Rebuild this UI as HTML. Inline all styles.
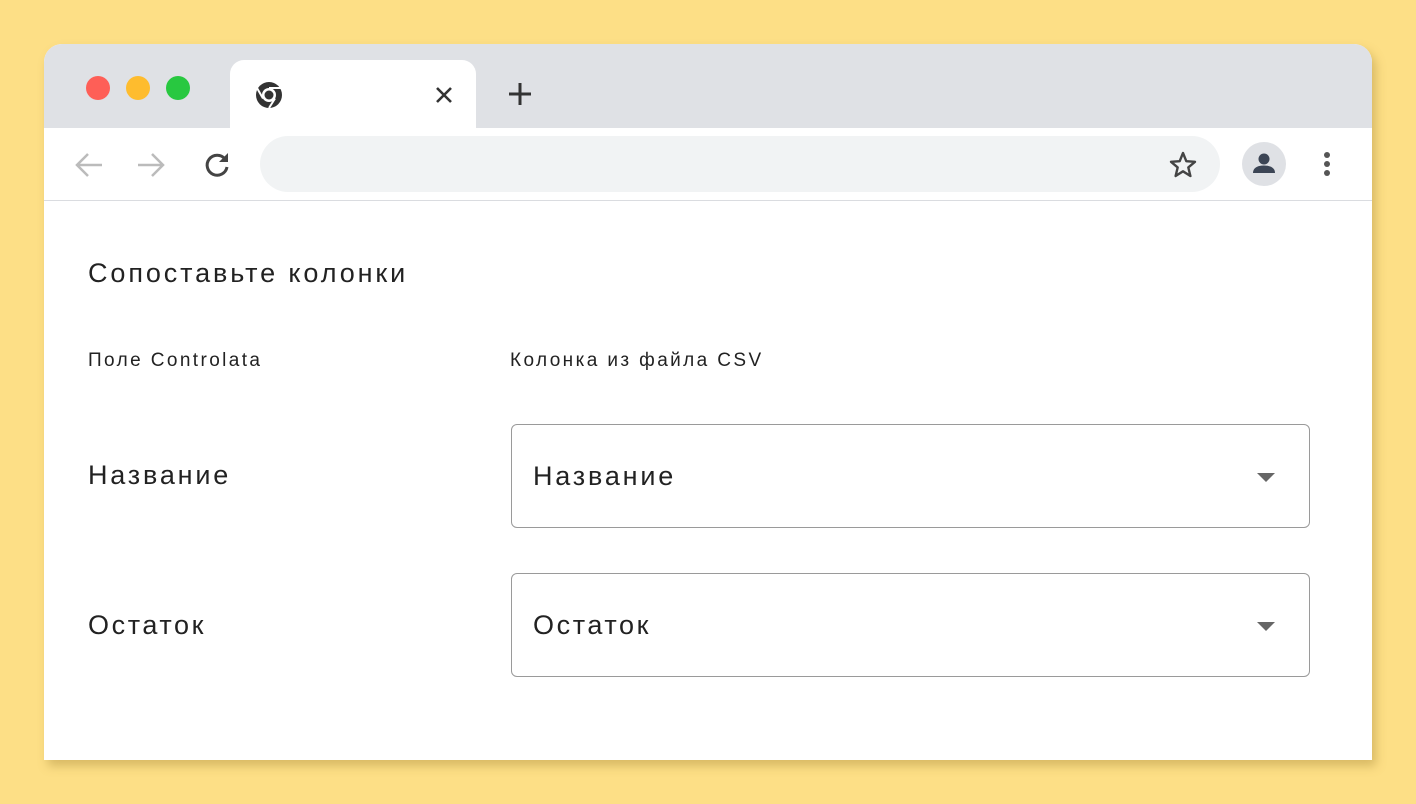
<!DOCTYPE html>
<html><head><meta charset="utf-8"><style>
*{margin:0;padding:0;box-sizing:border-box}
body{width:1416px;height:804px;background:#fddf86;font-family:"Liberation Sans","DejaVu Sans",sans-serif;position:relative;overflow:hidden}
.win{position:absolute;left:44px;top:44px;width:1328px;height:716px;background:#fff;border-radius:18px 18px 0 0;overflow:hidden;box-shadow:4px 6px 10px rgba(170,140,60,.45)}
.tabbar{position:absolute;left:0;top:0;width:100%;height:84px;background:#dfe1e5}
.dot{position:absolute;top:32px;width:24px;height:24px;border-radius:50%}
.tab{position:absolute;left:186px;top:16px;width:246px;height:70px;background:#fff;border-radius:14px 14px 0 0}
.toolbar{position:absolute;left:0;top:84px;width:100%;height:73px;background:#fff;border-bottom:1.5px solid #dadce0}
.addr{position:absolute;left:216px;top:8px;width:960px;height:56px;background:#f1f3f4;border-radius:28px}
.t{position:absolute;color:#222;white-space:nowrap}
.sel{position:absolute;left:467px;width:799px;height:104px;border:1.5px solid #9a9a9a;border-radius:6px}
.sel span{position:absolute;left:21px;top:36px;font-size:27px;color:#222;letter-spacing:2.8px}
.sel i{position:absolute;right:34px;top:48px;width:0;height:0;border-left:9px solid transparent;border-right:9px solid transparent;border-top:9px solid #666}
</style></head><body>
<div class="win">
 <div class="tabbar">
  <div class="dot" style="left:42px;background:#fe5f57"></div>
  <div class="dot" style="left:82px;background:#febc2e"></div>
  <div class="dot" style="left:122px;background:#28c840"></div>
  <div class="tab">
   <svg style="position:absolute;left:24px;top:20px" width="30" height="30" viewBox="0 0 30 30"><circle cx="15" cy="15" r="13" fill="#333"/><circle cx="15" cy="15" r="7" fill="#fff"/><circle cx="15" cy="15" r="4.5" fill="#333"/><path d="M15 8 L27 8" stroke="#fff" stroke-width="2"/><path d="M9 18.5 L3 8" stroke="#fff" stroke-width="2"/><path d="M21 18.5 L15 28" stroke="#fff" stroke-width="2"/></svg>
   <svg style="position:absolute;left:205px;top:26px" width="18" height="18" viewBox="0 0 18 18"><path d="M2 2L16 16M16 2L2 16" stroke="#333" stroke-width="2.6"/></svg>
  </div>
  <svg style="position:absolute;left:464px;top:38px" width="24" height="24" viewBox="0 0 24 24"><path d="M12 1V23M1 12H23" stroke="#333" stroke-width="3"/></svg>
 </div>
 <div class="toolbar">
  <svg style="position:absolute;left:30px;top:24px" width="30" height="26" viewBox="0 0 30 26"><path d="M28 13H4M14 2L3 13L14 24" stroke="#bbb" stroke-width="2.5" fill="none"/></svg>
  <svg style="position:absolute;left:92px;top:24px" width="30" height="26" viewBox="0 0 30 26"><path d="M2 13H26M16 2L27 13L16 24" stroke="#bbb" stroke-width="2.5" fill="none"/></svg>
  <svg style="position:absolute;left:158px;top:22px" width="30" height="30" viewBox="0 0 30 30"><path d="M23 9A10 10 0 1 0 25 17" stroke="#444" stroke-width="3" fill="none"/><path d="M26 3V12H17Z" fill="#444"/></svg>
  <div class="addr">
   <svg style="position:absolute;left:908px;top:14px" width="30" height="30" viewBox="0 0 30 30"><path d="M15 3L18.3 11.2L27 11.8L20.3 17.4L22.4 26L15 21.3L7.6 26L9.7 17.4L3 11.8L11.7 11.2Z" stroke="#444" stroke-width="2.4" fill="none" stroke-linejoin="round"/></svg>
  </div>
  <div style="position:absolute;left:1198px;top:14px;width:44px;height:44px;border-radius:50%;background:#dfe1e5"></div>
  <svg style="position:absolute;left:1198px;top:14px" width="44" height="44" viewBox="0 0 44 44"><circle cx="22" cy="17" r="5.5" fill="#3c4555"/><path d="M11 31C11 25 17 23.5 22 23.5C27 23.5 33 25 33 31Z" fill="#3c4555"/></svg>
  <div style="position:absolute;left:1280px;top:24px;width:6px;height:6px;border-radius:50%;background:#555"></div>
  <div style="position:absolute;left:1280px;top:33px;width:6px;height:6px;border-radius:50%;background:#555"></div>
  <div style="position:absolute;left:1280px;top:42px;width:6px;height:6px;border-radius:50%;background:#555"></div>
 </div>
 <div class="t" style="left:44px;top:214px;font-size:27px;letter-spacing:2.9px">Сопоставьте колонки</div>
 <div class="t" style="left:44px;top:306px;font-size:19px;letter-spacing:2.4px">Поле Controlata</div>
 <div class="t" style="left:466px;top:306px;font-size:19px;letter-spacing:2.4px">Колонка из файла CSV</div>
 <div class="t" style="left:44px;top:416px;font-size:27px;letter-spacing:2.8px">Название</div>
 <div class="t" style="left:44px;top:566px;font-size:27px;letter-spacing:2.6px">Остаток</div>
 <div class="sel" style="top:380px"><span>Название</span><i></i></div>
 <div class="sel" style="top:529px"><span style="letter-spacing:2.6px">Остаток</span><i></i></div>
</div>
</body></html>
